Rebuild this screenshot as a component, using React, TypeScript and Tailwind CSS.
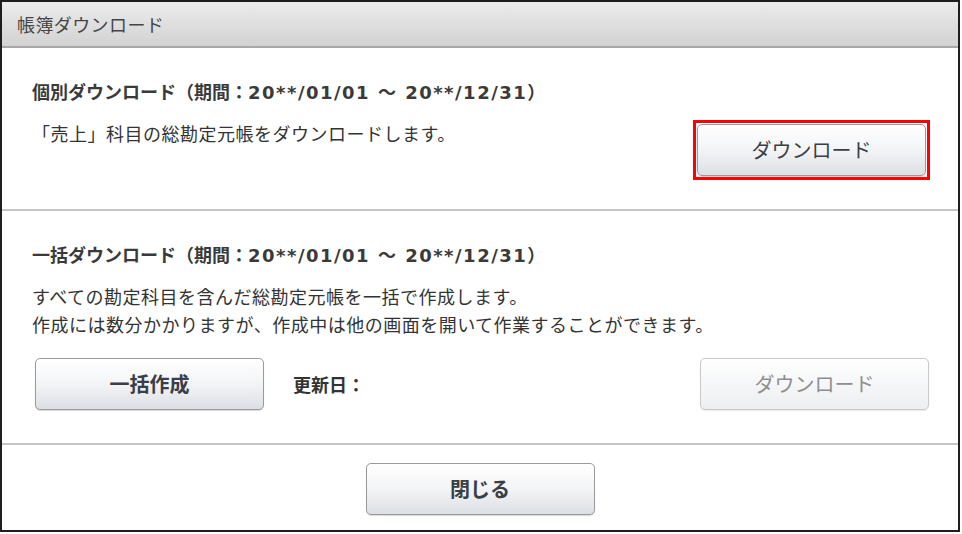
const FONT = "font-['Meiryo','Noto_Sans_CJK_JP',sans-serif]";
const TITLE = "text-[18px] leading-[26px] font-bold font-['DejaVu_Sans','Noto_Sans_CJK_JP',sans-serif] text-[#3a3a3a]";

function Btn({ label, disabled, bold }: { label: string; disabled?: boolean; bold?: boolean }) {
  return (
    <button
      className={
        disabled
          ? "w-[229px] h-[52px] rounded-[5px] border border-[#c9c9c9] bg-gradient-to-b from-[#ffffff] to-[#eceef1] text-[20px] text-[#8e8e8e] shadow-[0_1px_1px_rgba(0,0,0,0.08)]"
          : `w-[229px] h-[52px] rounded-[5px] border border-[#9a9a9a] bg-gradient-to-b from-[#ffffff] via-[#f3f4f6] to-[#dcdfe5] text-[20px] text-[#3a3e46] shadow-[0_1px_1px_rgba(0,0,0,0.15)] ${bold ? "font-bold" : ""}`
      }
    >
      {label}
    </button>
  );
}

function Title({ name }: { name: string }) {
  return (
    <div className={TITLE}>
      {name}（期間：<span className="tracking-[1.5px]">20**/01/01 ～ 20**/12/31</span>）
    </div>
  );
}

export default function App() {
  return (
    <div className={`w-[962px] h-[534px] bg-white ${FONT}`}>
      <div className="w-[960px] h-[532px] border-2 border-[#1e1e1e] flex flex-col text-[#333]">
        <div className="h-[46px] shrink-0 bg-gradient-to-b from-[#ececec] to-[#d2d2d2] border-b-2 border-[#a8a8a8] flex items-center pl-[15px] text-[18px] tracking-[0.4px] text-[#454545]">
          帳簿ダウンロード
        </div>

        <div className="h-[163px] shrink-0 pl-[30px] pr-[28px] pt-[32px] border-b-2 border-[#c6c6c6]">
          <Title name="個別ダウンロード" />
          <div className="mt-[14px] flex items-start justify-between">
            <div className="text-[18px] leading-[26px] tracking-[0.5px]">「売上」科目の総勘定元帳をダウンロードします。</div>
            <div className="border-[3px] border-[#ff0000] p-px">
              <Btn label="ダウンロード" />
            </div>
          </div>
        </div>

        <div className="h-[234px] shrink-0 pl-[30px] pr-[29px] pt-[32px] border-b-2 border-[#c6c6c6]">
          <Title name="一括ダウンロード" />
          <div className="mt-[13px] text-[18px] leading-[28px] tracking-[0.5px]">
            <div>すべての勘定科目を含んだ総勘定元帳を一括で作成します。</div>
            <div>作成には数分かかりますが、作成中は他の画面を開いて作業することができます。</div>
          </div>
          <div className="mt-[20px] flex items-center">
            <div className="ml-[3px]">
              <Btn label="一括作成" bold />
            </div>
            <div className="ml-[29px] text-[18px] font-bold">更新日：</div>
            <div className="ml-auto">
              <Btn label="ダウンロード" disabled />
            </div>
          </div>
        </div>

        <div className="flex-1 flex justify-center pt-[18px]">
          <Btn label="閉じる" bold />
        </div>
      </div>
    </div>
  );
}
